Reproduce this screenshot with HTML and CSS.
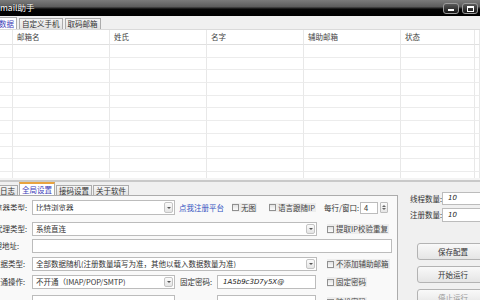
FILE: index.html
```html
<!DOCTYPE html>
<html>
<head>
<meta charset="utf-8">
<link rel="stylesheet" href="styles.css">
</head>
<body>
<div class="titlebar">
  <span class="title">mail助手</span>
  <div class="winbtns">
    <span class="wb"><i class="g-min"></i></span>
    <span class="wb"><i class="g-max"></i></span>
  </div>
</div>
<div class="toptabs">
  <span class="ttab sel first">载入数据</span><span class="ttab">自定义手机</span><span class="ttab">取码邮箱</span>
</div>
<div class="grid">
  <div class="grow ghead"><span></span><span>邮箱名</span><span>姓氏</span><span>名字</span><span>辅助邮箱</span><span>状态</span><span></span></div>
  <div class="grow"><span></span><span></span><span></span><span></span><span></span><span></span><span></span></div>
  <div class="grow"><span></span><span></span><span></span><span></span><span></span><span></span><span></span></div>
  <div class="grow"><span></span><span></span><span></span><span></span><span></span><span></span><span></span></div>
  <div class="grow"><span></span><span></span><span></span><span></span><span></span><span></span><span></span></div>
  <div class="grow"><span></span><span></span><span></span><span></span><span></span><span></span><span></span></div>
  <div class="grow"><span></span><span></span><span></span><span></span><span></span><span></span><span></span></div>
  <div class="grow"><span></span><span></span><span></span><span></span><span></span><span></span><span></span></div>
  <div class="grow"><span></span><span></span><span></span><span></span><span></span><span></span><span></span></div>
  <div class="grow"><span></span><span></span><span></span><span></span><span></span><span></span><span></span></div>
  <div class="grow"><span></span><span></span><span></span><span></span><span></span><span></span><span></span></div>
  <div class="grow"><span></span><span></span><span></span><span></span><span></span><span></span><span></span></div>
</div>
<div class="splitter"></div>
<div class="bottom">
  <div class="tabctl">
    <div class="btabs">
      <span class="btab first">运行日志</span><span class="btab sel">全局设置</span><span class="btab">接码设置</span><span class="btab">关于软件</span>
    </div>
    <div class="panel">
      <div class="prow r1">
        <div class="lbl"><span>浏览器类型:</span></div>
        <div class="combo w143"><span>比特浏览器</span><i class="arr"></i></div>
        <span class="link">点我注册平台</span>
        <label class="chk c-nopic"><i></i>无图</label>
        <label class="chk c-lang"><i></i>语言跟随IP</label>
        <span class="plain c-per">每行/窗口:</span>
        <div class="spin"><span class="txt sv">4</span><span class="spbtn"><b class="up"></b><b class="dn"></b></span></div>
      </div>
      <div class="prow r2">
        <div class="lbl"><span>代理类型:</span></div>
        <div class="combo w285"><span>系统直连</span><i class="arr"></i></div>
        <label class="chk c-right"><i></i>提取IP校验重复</label>
      </div>
      <div class="prow r3">
        <div class="lbl e19"><span>代理地址:</span></div>
        <div class="txt w360"></div>
      </div>
      <div class="prow r4">
        <div class="lbl e25"><span>注册数据类型:</span></div>
        <div class="combo w285"><span>全部数据随机(注册数量填写为准，其他以载入数据数量为准)</span><i class="arr"></i></div>
        <label class="chk c-right"><i></i>不添加辅助邮箱</label>
      </div>
      <div class="prow r5">
        <div class="lbl e25"><span>邮箱开通操作:</span></div>
        <div class="combo w143"><span>不开通（IMAP/POP/SMTP)</span><i class="arr"></i></div>
        <span class="plain c-pwd">固定密码:</span>
        <div class="txt w99 it">1A5b9c3D7y5X@</div>
        <label class="chk c-right2"><i></i>固定密码</label>
      </div>
      <div class="prow r6">
        <div class="lbl"><span></span></div>
        <div class="txt w143"></div>
        <span class="gap42"></span>
        <div class="txt w99"></div>
        <label class="chk c-right2"><i></i>随机密码</label>
      </div>
    </div>
  </div>
  <div class="side">
    <div class="srow s1"><span class="slbl">线程数量:</span><div class="txt sin it">10</div></div>
    <div class="srow s2"><span class="slbl">注册数量:</span><div class="txt sin it">10</div></div>
    <div class="btn b1">保存配置</div>
    <div class="btn">开始运行</div>
    <div class="btn dis">停止运行</div>
  </div>
</div>
</body>
</html>
```
FILE: styles.css
```css
* { box-sizing: border-box; margin: 0; padding: 0; }
html, body { width: 480px; height: 300px; overflow: hidden; }
body {
  font-family: "Noto Sans CJK SC", "Microsoft YaHei", sans-serif;
  font-size: 7.5px;
  line-height: 1;
  color: #333;
  background: #f0f0f0;
}

/* title bar */
.titlebar {
  height: 16px;
  display: flex;
  align-items: flex-start;
  color: #fff;
  background: linear-gradient(#7b7b7b 0, #5c5c5c 42%, #2a2a2a 50%, #050505 58%, #000 100%);
}
.title { font-size: 8.5px; padding-top: 3px; text-shadow: 0 0 1px #000; }
.winbtns { margin-left: auto; display: flex; gap: 3px; margin-top: 3px; padding-right: 2px; }
.wb {
  width: 16px; height: 11px;
  border: 1px solid #9c9c9c; border-radius: 3px;
  background: linear-gradient(#5a5a5a, #151515);
  display: flex; align-items: center; justify-content: center;
}
.g-min { display: block; width: 6px; height: 2px; background: #fff; margin-top: 3px; }
.g-max { display: block; width: 7px; height: 6px; border: 1px solid #fff; border-top-width: 2px; }

/* top tabs */
.toptabs { height: 13px; display: flex; align-items: flex-end; overflow: hidden; }
.ttab {
  height: 11px; padding: 0 2px; margin-left: 2px;
  border: 1px solid #acacac; border-bottom: none;
  background: linear-gradient(#f5f5f5, #e2e2e2);
  display: flex; align-items: center; white-space: nowrap;
}
.ttab.sel { height: 12px; background: #fff; color: #3c3cb8; }
.ttab.first { margin-left: -18px; border-left: none; }

/* data grid */
.grid { height: 149px; background: #fff; overflow: hidden; border-top: 1px solid #dadada; }
.grow {
  display: grid;
  grid-template-columns: 13px 97px 97px 97px 97px 74px 1fr;
  height: 12.7px;
}
.grow > span {
  border-right: 1px solid #e8e8e8;
  border-bottom: 1px solid #ececec;
  padding-left: 4px;
  display: flex; align-items: center;
  white-space: nowrap;
}
.ghead { height: 15px; }
.ghead > span { border-bottom-color: #e0e0e0; color: #444; }

.splitter { height: 4px; background: #f4f4f4; border-bottom: 2px solid #c9c9c9; }

/* bottom area */
.bottom { display: flex; height: 118px; overflow: hidden; }
.tabctl { width: 398px; flex: none; display: flex; flex-direction: column; overflow: hidden; }
.btabs { height: 13px; flex: none; display: flex; align-items: flex-end; overflow: hidden; }
.btab {
  height: 10px; padding: 0 2px; margin-right: 1px;
  border: 1px solid #acacac; border-bottom: none;
  background: linear-gradient(#f6f6f6, #e3e3e3);
  display: flex; align-items: center; white-space: nowrap;
}
.btab.first { margin-left: -18px; }
.btab.sel { height: 13px; background: #fff; color: #3c3cb8; border-top: 2px solid #e9a33f; }
.panel {
  flex: 1; min-height: 0; overflow: hidden;
  background: #f9f9f9;
  border-top: 1px solid #acacac;
  border-right: 1px solid #acacac;
  padding-top: 4px;
}
.prow { display: flex; align-items: center; height: 14px; margin-bottom: 4px; flex: none; }
.prow.r1 { height: 15px; margin-bottom: 7px; }
.prow.r2 { margin-bottom: 3px; }
.prow.r5 { margin-bottom: 6px; }

.lbl {
  width: 32px; flex: none; overflow: hidden;
  display: flex; justify-content: flex-end;
  padding-right: 5px; white-space: nowrap;
}
.lbl.e19 { padding-right: 13px; }
.lbl.e25 { padding-right: 7px; }

.txt {
  height: 100%; flex: none;
  border: 1px solid #bcbcbc; background: #fff;
  padding-left: 3px;
  display: flex; align-items: center; white-space: nowrap; overflow: hidden;
}
.it { font-style: italic; font-family: "DejaVu Sans", "Noto Sans", sans-serif; font-size: 7px; color: #222; padding-left: 5px; }
.combo {
  height: 100%; flex: none;
  border: 1px solid #bcbcbc; background: #fff;
  padding-left: 3px;
  display: flex; align-items: center; white-space: nowrap; overflow: hidden;
}
.combo > span { overflow: hidden; flex: 1; }
.arr {
  flex: none;
  width: 9px; height: calc(100% - 2px); margin-right: 1px;
  border: 1px solid #c4c4c4; border-radius: 2px;
  background: linear-gradient(#fbfbfb, #e4e4e4);
  display: flex; align-items: center; justify-content: center;
}
.arr::after {
  content: ""; display: block;
  border-left: 2px solid transparent; border-right: 2px solid transparent;
  border-top: 2px solid #555;
}
.w143 { width: 143px; }
.w285 { width: 285px; }
.w360 { width: 360px; }
.w99 { width: 99px; }

.link { color: #3050c0; margin-left: 4px; white-space: nowrap; }
.plain { white-space: nowrap; }
.chk {
  display: flex; align-items: center; gap: 2px;
  background: #ededed; padding: 1px 1px 1px 0;
  white-space: nowrap; color: #444;
}
.chk i {
  display: block; width: 7px; height: 7px;
  border: 1px solid #909090;
  background: linear-gradient(#e2e2e2, #fbfbfb);
}
.c-nopic { margin-left: 8px; }
.c-lang { margin-left: 12px; }
.c-per { margin-left: 8px; }
.c-right { margin-left: 10px; }
.c-right2 { margin-left: 11px; }
.c-pwd { margin-left: 5px; width: 37px; }
.gap42 { width: 42px; flex: none; }

.spin { display: flex; align-items: center; gap: 2px; height: 12px; margin-left: 1px; }
.sv { width: 18px; font-size: 7.5px; }
.spbtn {
  width: 8px; height: 11px;
  border: 1px solid #bdbdbd; border-radius: 1px;
  background: linear-gradient(#fafafa, #e6e6e6);
  display: flex; flex-direction: column; align-items: center; justify-content: space-around;
  padding: 1px 0;
}
.spbtn .up { border-left: 2px solid transparent; border-right: 2px solid transparent; border-bottom: 2px solid #666; }
.spbtn .dn { border-left: 2px solid transparent; border-right: 2px solid transparent; border-top: 2px solid #666; }

/* side */
.side { flex: 1; padding-top: 10px; overflow: hidden; }
.srow { display: flex; align-items: center; height: 13px; padding-left: 12px; }
.srow.s1 { margin-bottom: 3px; }
.srow.s2 { height: 14px; }
.slbl { width: 33px; white-space: nowrap; }
.sin { width: 45px; }
.btn {
  margin-left: 19px; width: 72px; height: 17px;
  border: 1px solid #b3b3b3; border-radius: 3px;
  background: linear-gradient(#f9f9f9, #e5e5e5);
  display: flex; align-items: center; justify-content: center;
  margin-bottom: 6px; color: #333;
}
.btn.b1 { margin-top: 21px; }
.btn.dis { color: #9a9a9a; }
```
